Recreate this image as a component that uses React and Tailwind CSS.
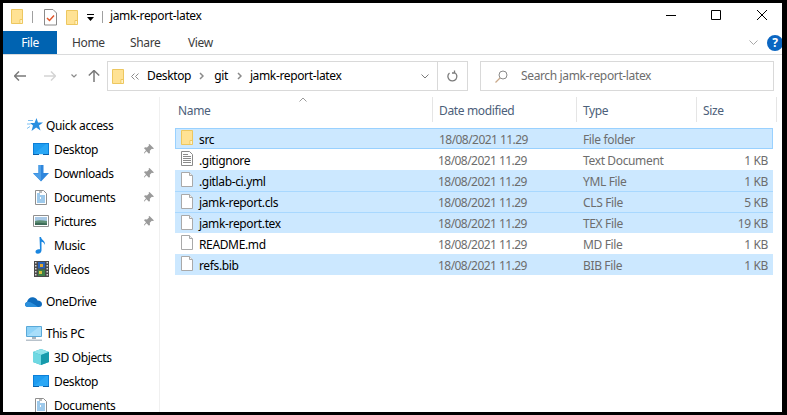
import React from 'react';

const FONT = 'font-["Noto_Sans","Liberation_Sans",sans-serif] tracking-[-0.36px]';

const Folder = ({ className = '' }) => (
  <svg className={className} width="14" height="17" viewBox="0 0 14 17">
    <path d="M1.5 1.5h11v14h-11z" fill="#ffe294" stroke="#edc75f" />
    <path d="M10 15.5v-4h2.500" fill="none" stroke="#edc75f" />
    <path d="M10.5 12h1.500v3h-1.500z" fill="#fff3c9" />
  </svg>
);

const BlankFile = () => (
  <svg width="14" height="17" viewBox="0 0 14 17">
    <path d="M1.5 1.5h8l3 3v11h-11z" fill="#fff" stroke="#a9a9a9" />
    <path d="M9.5 1.5v3h3" fill="#f0f0f0" stroke="#a9a9a9" />
  </svg>
);

const TextFile = () => (
  <svg width="14" height="17" viewBox="0 0 14 17">
    <path d="M1.5 1.5h8l3 3v11h-11z" fill="#fff" stroke="#8a8a8a" />
    <path d="M3 4.5h5M3 6.5h8M3 8.5h8M3 10.5h8M3 12.5h8" stroke="#8a8a8a" />
  </svg>
);

const DesktopIcon = () => (
  <svg width="16" height="14" viewBox="0 0 16 14">
    <path d="M0 1h16v12h-16z" fill="#0c7fd8" />
    <path d="M1 2h14v10h-14z" fill="#1e9cf0" />
    <path d="M1 12l12-10h2v10z" fill="#2aa7f5" />
    <path d="M0 12h16v1h-16z" fill="#0a5fa8" />
    <path d="M6 12h4v1h-4z" fill="#cfe8fa" />
  </svg>
);

const DownloadsIcon = () => (
  <svg width="16" height="17" viewBox="0 0 16 17">
    <path d="M5.5 0h5v8h5.500l-8 8.500-8-8.500h5.500z" fill="#2f86dc" />
    <path d="M5.500 0h2.500v16l-8-7.500h5.500z" fill="#4d9fe8" />
  </svg>
);

const DocumentsIcon = () => (
  <svg width="16" height="17" viewBox="0 0 16 17">
    <path d="M2.500 1.500h8l3 3v11h-11z" fill="#fff" stroke="#8f8f8f" />
    <path d="M4 5h3M4 7h8M4 9h3M8 9h4M4 11h8M4 13h8" stroke="#3c94d8" />
    <path d="M6 3h3" stroke="#7a7a7a" />
  </svg>
);

const PicturesIcon = () => (
  <svg width="16" height="12" viewBox="0 0 16 12">
    <path d="M.5.500h15v11h-15z" fill="#fff" stroke="#8f8f8f" />
    <path d="M2 2h12v4h-12z" fill="#a9c9e6" />
    <path d="M2 6c4-1.500 8-.500 12 0v4h-12z" fill="#5f8f75" />
    <path d="M2 8c4-.500 8 0 12 .500v1.500h-12z" fill="#3d6b58" />
  </svg>
);

const MusicIcon = () => (
  <svg width="16" height="17" viewBox="0 0 16 17">
    <path d="M6.500 0h1.500c.3 3 4.500 3.500 4 8-.6-2.200-2-3-3.500-3.300v8.800c0 2-2 3.300-3.700 3.300-1.500 0-2.300-.8-2.300-2 0-1.800 2-3 4.500-2.500z" fill="#1a86e0" />
  </svg>
);

const VideosIcon = () => (
  <svg width="15" height="16" viewBox="0 0 15 16">
    <path d="M0 0h15v16h-15z" fill="#4a4a4a" />
    <path d="M1 1h1.500v1.500h-1.500zM1 4h1.500v1.500h-1.500zM1 7h1.500v1.500h-1.500zM1 10h1.500v1.500h-1.500zM1 13h1.500v1.500h-1.500zM12.500 1h1.500v1.500h-1.500zM12.500 4h1.500v1.500h-1.500zM12.500 7h1.500v1.500h-1.500zM12.500 10h1.500v1.500h-1.500zM12.500 13h1.500v1.500h-1.500z" fill="#d8d8d8" />
    <path d="M4 1h7v6.500h-7z" fill="#2a62b8" />
    <path d="M4 8.500h7v6.500h-7z" fill="#3f7f4a" />
    <path d="M6 3h3v3h-3z" fill="#e3a72f" />
    <path d="M5 10h3v3h-3z" fill="#d9c23a" />
  </svg>
);

const StarIcon = () => (
  <svg width="16" height="14" viewBox="0 0 16 14">
    <path d="M9.500 0l1.500 4.500h5l-4 3 1.500 5-4.300-3-4.700 3.500 1.500-5.500-3-2.500h4.500z" fill="#2a8fe0" />
    <path d="M1 2.500h5M0 6h3.500M0 10.500l3-2" stroke="#7cc0f2" />
  </svg>
);

const CloudIcon = () => (
  <svg width="17" height="11" viewBox="0 0 17 11">
    <path d="M3 11c-3.500 0-4-4-1-5 .8-3.500 4-5.500 7-4.500 2 .6 3 1.700 3.500 3 2.500 0 4.500 1.500 4.500 3.500s-1 3-3 3z" fill="#0f6cbd" />
    <path d="M3 11c-1.800 0-3-1-3-2.500 0-1 .8-2 2-2.500 3-1 8 3 11 5z" fill="#2b8fdc" />
  </svg>
);

const MonitorIcon = () => (
  <svg width="16" height="15" viewBox="0 0 16 15">
    <path d="M.5.500h15v10h-15z" fill="#8fd3f8" stroke="#5aa9d8" />
    <path d="M1 10l12-9h2v9z" fill="#a9defa" />
    <path d="M6 11h4v2h-4z" fill="#a8b3bd" />
    <path d="M0 13.500h16v1.500h-16z" fill="#b8c2cb" />
  </svg>
);

const CubeIcon = () => (
  <svg width="16" height="16" viewBox="0 0 16 16">
    <path d="M8 0l8 3v10l-8 3-8-3v-10z" fill="#27b3c4" />
    <path d="M8 0l8 3-8 3-8-3z" fill="#8fe2ea" />
    <path d="M8 6v10l-8-3v-10z" fill="#6fd8e2" />
    <path d="M8 6l8-3v10l-8 3z" fill="#179aab" />
  </svg>
);

const Pin = () => (
  <svg width="11" height="11" viewBox="0 0 11 11">
    <path d="M6.500 0l4.500 4.500-1.200.6-1-.4-2 2 .2 2-1 1-2.500-2.500-2.500 2.500v-1l2-2.500-2-2 1-1 2 .2 2-2-.4-1z" fill="#9a9a9a" />
  </svg>
);

const Crumb = () => (
  <svg width="5" height="8" viewBox="0 0 5 8"><path d="M1 1l3 3-3 3" fill="none" stroke="#8a8a8a" strokeWidth="1.500" /></svg>
);

const navGroups = [
  { pt: 'pt-[16px]', items: [
    { label: 'Quick access', icon: <StarIcon />, row: 'pl-[24px]', iconBox: 'w-[16px]', gap: 'ml-[3px]' },
    { label: 'Desktop', icon: <DesktopIcon />, pin: true },
    { label: 'Downloads', icon: <DownloadsIcon />, pin: true },
    { label: 'Documents', icon: <DocumentsIcon />, pin: true },
    { label: 'Pictures', icon: <PicturesIcon />, pin: true },
    { label: 'Music', icon: <MusicIcon /> },
    { label: 'Videos', icon: <VideosIcon /> },
  ] },
  { pt: 'pt-[8px]', items: [{ label: 'OneDrive', icon: <CloudIcon />, row: 'pl-[22px]', iconBox: 'w-[17px]', gap: 'ml-[4px]' }] },
  { pt: 'pt-[8px]', items: [
    { label: 'This PC', icon: <MonitorIcon />, row: 'pl-[22px]', iconBox: 'w-[17px]', gap: 'ml-[4px]' },
    { label: '3D Objects', icon: <CubeIcon /> },
    { label: 'Desktop', icon: <DesktopIcon /> },
    { label: 'Documents', icon: <DocumentsIcon /> },
  ] },
];

const files = [
  { name: 'src', type: 'File folder', size: '', icon: <Folder />, sel: true, focus: true },
  { name: '.gitignore', type: 'Text Document', size: '1 KB', icon: <TextFile /> },
  { name: '.gitlab-ci.yml', type: 'YML File', size: '1 KB', icon: <BlankFile />, sel: true },
  { name: 'jamk-report.cls', type: 'CLS File', size: '5 KB', icon: <BlankFile />, sel: true, line: true },
  { name: 'jamk-report.tex', type: 'TEX File', size: '19 KB', icon: <BlankFile />, sel: true, line: true },
  { name: 'README.md', type: 'MD File', size: '1 KB', icon: <BlankFile /> },
  { name: 'refs.bib', type: 'BIB File', size: '1 KB', icon: <BlankFile />, sel: true },
];

function NavRow({ item }) {
  return (
    <div className={`flex h-[24px] items-center ${item.row || 'pl-[30px]'}`}>
      <span className={`flex h-[17px] items-center justify-center ${item.iconBox || 'w-[16px]'}`}>{item.icon}</span>
      <span className={`pt-[2px] text-[12px] text-black ${item.gap || 'ml-[5px]'}`}>{item.label}</span>
      {item.pin && <span className="ml-auto mr-[5px] flex"><Pin /></span>}
    </div>
  );
}

function FileRow({ file }) {
  let tone = 'bg-white';
  if (file.sel) tone = 'bg-[#cce8ff]';
  if (file.focus) tone = 'bg-[#cce8ff] border border-[#99d1ff]';
  if (file.line) tone = 'bg-[#cce8ff] border-t border-[#a8d8ff]';
  return (
    <div className={`box-border flex h-[21px] w-[598px] items-center text-[12px] ${tone}`}>
      <span className={`flex w-[263px] items-center gap-[5px] ${file.focus ? 'pl-[4px]' : 'pl-[5px]'}`}>
        <span className="-mt-[2px] flex">{file.icon}</span>
        <span className="pt-[2px] text-black">{file.name}</span>
      </span>
      <span className={`pt-[2px] tracking-[-0.55px] text-[#6d6d6d] ${file.focus ? 'w-[144px]' : 'w-[145px]'}`}>18/08/2021 11.29</span>
      <span className="w-[120px] pt-[2px] text-[#6d6d6d]">{file.type}</span>
      <span className="w-[65px] pt-[2px] text-right text-[#6d6d6d]">{file.size}</span>
    </div>
  );
}

export default function App() {
  return (
    <div className={`h-[415px] w-[787px] overflow-hidden bg-black pb-[3px] pl-[3px] pr-[5px] pt-[3px] ${FONT}`}>
      <div className="flex h-full flex-col overflow-hidden bg-white">
        {/* title bar */}
        <div className="flex h-[28px] shrink-0 items-center pl-[7px]">
          <Folder className="-mt-[2px]" />
          <span className="ml-[8px] h-[12px] w-px bg-[#a0a0a0]" />
          <svg className="ml-[11px]" width="13" height="17" viewBox="0 0 13 17">
            <path d="M.5.500h8.500l3.500 3.500v12h-12z" fill="#fff" stroke="#8a8a8a" />
            <path d="M3 9l2.500 2.500 4.500-5" fill="none" stroke="#e2572b" strokeWidth="1.500" />
          </svg>
          <Folder className="ml-[8px]" />
          <svg className="ml-[8px]" width="8" height="7" viewBox="0 0 8 7">
            <path d="M0 0h7v1h-7zM0 3h7l-3.500 4z" fill="#000" />
          </svg>
          <span className="ml-[7px] h-[12px] w-px bg-[#a0a0a0]" />
          <span className="ml-[7px] pb-[2px] text-[12px] text-black">jamk-report-latex</span>
          <span className="ml-auto flex items-center pb-[4px]">
            <svg width="10" height="1" viewBox="0 0 10 1"><path d="M0 0h10v1h-10z" fill="#000" /></svg>
            <svg className="ml-[35px]" width="10" height="10" viewBox="0 0 10 10"><path d="M.5.500h9v9h-9z" fill="none" stroke="#000" /></svg>
            <svg className="ml-[36px] mr-[15px]" width="10" height="10" viewBox="0 0 10 10"><path d="M0 0l10 10M10 0l-10 10" stroke="#000" /></svg>
          </span>
        </div>

        {/* ribbon tabs */}
        <div className="flex h-[24px] shrink-0 items-stretch border-b border-[#dadbdc]">
          <div className="flex w-[54px] items-center justify-center bg-[#0063b1] text-[12px] text-white">File</div>
          <span className="ml-[15px] w-[58px] self-center text-[12px] text-[#3b3b3b]">Home</span>
          <span className="w-[58px] self-center text-[12px] text-[#3b3b3b]">Share</span>
          <span className="self-center text-[12px] text-[#3b3b3b]">View</span>
          <span className="ml-auto flex items-center">
            <svg width="9" height="5" viewBox="0 0 9 5"><path d="M.500.500l4 4 4-4" fill="none" stroke="#a8a8a8" /></svg>
            <span className="-mr-[1px] ml-[9px] flex h-[16px] w-[16px] items-center justify-center rounded-full bg-[#0b66c2] text-[12px] font-bold leading-none text-white">?</span>
          </span>
        </div>

        {/* nav bar */}
        <div className="flex h-[42px] shrink-0 items-center">
          <svg className="ml-[11px]" width="12" height="10" viewBox="0 0 12 10"><path d="M5 .500l-4.500 4.500 4.500 4.500M.5 5h11.500" fill="none" stroke="#7a7a7a" strokeWidth="1.500" /></svg>
          <svg className="ml-[18px]" width="12" height="10" viewBox="0 0 12 10"><path d="M7 .500l4.500 4.500-4.500 4.500M11.500 5h-11.500" fill="none" stroke="#d4d4d4" strokeWidth="1.500" /></svg>
          <svg className="ml-[15px]" width="6" height="4" viewBox="0 0 6 4"><path d="M.500.500l2.500 2.500 2.500-2.500" fill="none" stroke="#8a8a8a" strokeWidth="1.200" /></svg>
          <svg className="ml-[11px]" width="12" height="12" viewBox="0 0 12 12"><path d="M.800 5.500l5.200-5 5.200 5M6 .5v11.500" fill="none" stroke="#7a7a7a" strokeWidth="1.500" /></svg>
          <div className="ml-[7px] flex h-[30px] w-[361px] items-center border border-[#d9d9d9] pl-[3px]">
            <Folder />
            <svg className="ml-[6px]" width="8" height="7" viewBox="0 0 8 7"><path d="M3.500.500l-3 3 3 3M7.500.500l-3 3 3 3" fill="none" stroke="#8a8a8a" /></svg>
            <span className="ml-[8px] text-[12px] text-black">Desktop</span>
            <span className="ml-[8px] flex"><Crumb /></span>
            <span className="ml-[10px] text-[12px] text-black">git</span>
            <span className="ml-[9px] flex"><Crumb /></span>
            <span className="ml-[8px] text-[12px] text-black">jamk-report-latex</span>
            <svg className="ml-auto mr-[8px]" width="8" height="5" viewBox="0 0 8 5"><path d="M.500.500l3.500 3.500 3.500-3.500" fill="none" stroke="#7a7a7a" /></svg>
            <span className="flex h-full w-[30px] items-center justify-center border-l border-[#d9d9d9]">
              <svg width="11" height="12" viewBox="0 0 11 12"><path d="M2.500 3a4.500 4.500 0 1 0 5-.5M7.500 .500v2.500h-2.500" fill="none" stroke="#7a7a7a" strokeWidth="1.300" /></svg>
            </span>
          </div>
          <div className="ml-[12px] flex h-[30px] w-[294px] items-center border border-[#d9d9d9] pl-[14px]">
            <svg width="13" height="13" viewBox="0 0 13 13"><circle cx="8" cy="5" r="4" fill="none" stroke="#8a8a8a" /><path d="M5 8l-4.500 4.500" stroke="#c9a98a" strokeWidth="1.200" /></svg>
            <span className="ml-[13px] text-[12px] text-[#6d6d6d]">Search jamk-report-latex</span>
          </div>
        </div>

        {/* body */}
        <div className="flex min-h-0 flex-1">
          <div className="w-[157px] shrink-0 overflow-hidden border-r border-[#f0f0f0]">
            {navGroups.map((group, i) => (
              <div key={i} className={group.pt}>
                {group.items.map((item, j) => <NavRow key={j} item={item} />)}
              </div>
            ))}
          </div>
          <div className="flex-1 pl-[15px]">
            <div className="relative flex h-[25px] items-center text-[12px] text-[#4c607a]">
              <svg className="absolute left-[124px] top-0" width="8" height="5" viewBox="0 0 8 5"><path d="M.500 4.500l3.500-3.500 3.500 3.500" fill="none" stroke="#9a9a9a" /></svg>
              <span className="w-[258px] self-stretch border-r border-[#e5e5e5] pl-[3px] leading-[27px]">Name</span>
              <span className="w-[144px] self-stretch border-r border-[#e5e5e5] pl-[6px] leading-[27px]">Date modified</span>
              <span className="w-[120px] self-stretch border-r border-[#e5e5e5] pl-[6px] leading-[27px]">Type</span>
              <span className="w-[80px] self-stretch border-r border-[#e5e5e5] pl-[6px] leading-[27px]">Size</span>
            </div>
            <div className="mt-[6px]">
              {files.map((file) => <FileRow key={file.name} file={file} />)}
            </div>
          </div>
        </div>
      </div>
    </div>
  );
}
